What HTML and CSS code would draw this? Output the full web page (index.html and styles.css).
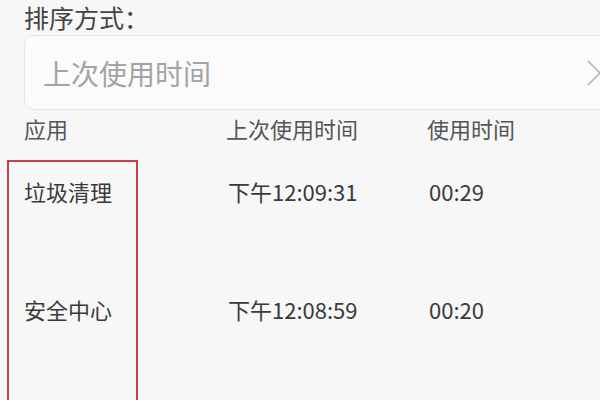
FILE: index.html
```html
<!DOCTYPE html>
<html lang="zh-CN">
<head>
    <meta charset="UTF-8">
    <meta name="viewport" content="width=device-width, initial-scale=1.0">
    <title>排序方式</title>
    <link rel="stylesheet" href="styles.css">
</head>
<body>
    <div class="page">
        <h1 class="title">排序方式：</h1>

        <div class="picker">
            <span class="picker-value">上次使用时间</span>
            <svg class="chevron" width="14" height="26" viewBox="0 0 14 26">
                <path d="M1 1 L13 13 L1 25" fill="none" stroke="#b0b0b0" stroke-width="1.5"/>
            </svg>
        </div>

        <div class="table">
            <div class="col col-app">
                <div class="head">应用</div>
                <div class="cells highlight">
                    <div class="cell">垃圾清理</div>
                    <div class="cell">安全中心</div>
                </div>
            </div>
            <div class="col col-last">
                <div class="head">上次使用时间</div>
                <div class="cells">
                    <div class="cell">下午12:09:31</div>
                    <div class="cell">下午12:08:59</div>
                </div>
            </div>
            <div class="col">
                <div class="head">使用时间</div>
                <div class="cells">
                    <div class="cell">00:29</div>
                    <div class="cell">00:20</div>
                </div>
            </div>
        </div>
    </div>
</body>
</html>
```

FILE: styles.css
```css
body {
    margin: 0;
    background-color: #f7f7f7;
    font-family: "Noto Sans CJK SC", "Noto Sans", sans-serif;
    color: #3a3a3a;
}

.page {
    height: 400px;
    overflow: hidden;
    padding-left: 24px;
}

.title {
    margin: 0;
    font-size: 25px;
    font-weight: normal;
    line-height: 35px;
    color: #444;
}

.picker {
    margin-right: -20px;
    height: 75px;
    box-sizing: border-box;
    border: 1px solid #e4e4e4;
    border-radius: 10px;
    background-color: #fbfbfb;
    display: flex;
    align-items: center;
    justify-content: space-between;
    padding: 0 18px 0 18px;
}

.picker-value {
    font-size: 28px;
    color: #a3a3a3;
}

.table {
    display: flex;
    margin-top: 6px;
}

.col {
    flex: 1;
}

.col-app {
    flex: 0 0 202px;
}

.col-last {
    flex: 0 0 201px;
}

.head {
    font-size: 22px;
    line-height: 24px;
    color: #555;
}

.cells {
    margin-top: 20px;
    padding-top: 17px;
    border: 2px solid transparent;
    height: 260px;
}

.cell {
    font-size: 22px;
    line-height: 24px;
    margin-bottom: 94px;
}

.highlight {
    border-color: #c8404a;
    margin-left: -17px;
    padding-left: 15px;
    width: 131px;
    box-sizing: border-box;
}
```
